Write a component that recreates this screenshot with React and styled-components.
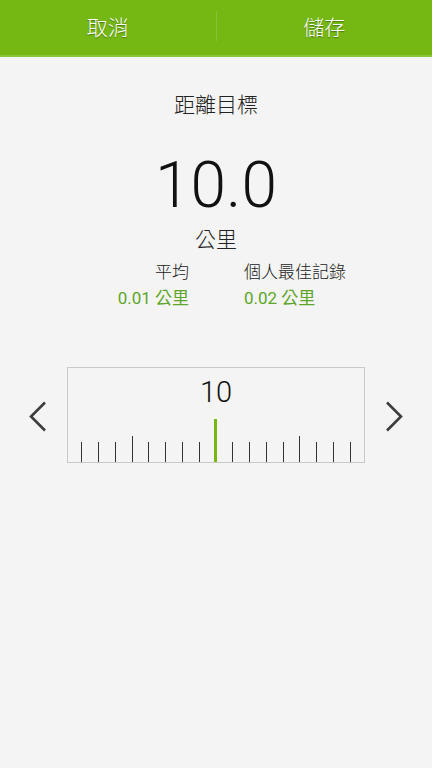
import styled, { createGlobalStyle } from "styled-components";

const GlobalStyle = createGlobalStyle`
  html, body {
    margin: 0;
    padding: 0;
    background: #f4f4f4;
  }
  body {
    font-family: Roboto, "Noto Sans CJK TC", sans-serif;
  }
`;

const Page = styled.div`
  width: 432px;
  min-height: 768px;
  background: #f4f4f4;
  display: flex;
  flex-direction: column;
`;

const TopBar = styled.div`
  height: 55px;
  background: #75b713;
  border-bottom: 2px solid #8cc43a;
  display: grid;
  grid-template-columns: 1fr 1px 1fr;
  align-items: center;
`;

const BarButton = styled.button`
  background: transparent;
  border: none;
  height: 100%;
  color: #fff;
  font-family: Roboto, "Noto Sans CJK TC", sans-serif;
  font-size: 21px;
  font-weight: 300;
  text-shadow: 0 1px 1px rgba(0, 0, 0, 0.35);
  padding: 0 0 4px;
  cursor: pointer;
`;

const BarDivider = styled.div`
  width: 1px;
  height: 30px;
  margin-bottom: 4px;
  background: #86c23a;
`;

const Content = styled.main`
  display: flex;
  flex-direction: column;
  align-items: center;
`;

const Title = styled.h1`
  margin: 34px 0 0;
  font-size: 21px;
  font-weight: 300;
  line-height: 28px;
  color: #222;
`;

const BigValue = styled.div`
  margin-top: 31px;
  font-size: 64px;
  font-weight: 300;
  line-height: 72px;
  color: #111;
`;

const Unit = styled.div`
  margin-top: 4px;
  font-size: 21px;
  font-weight: 300;
  line-height: 28px;
  color: #222;
`;

const Stats = styled.div`
  margin-top: 5px;
  display: grid;
  grid-template-columns: 1fr 1fr;
  column-gap: 55px;
  width: 100%;
  padding-left: 1px;
  box-sizing: border-box;
`;

const Stat = styled.div`
  display: flex;
  flex-direction: column;
  align-items: ${({ align }) => (align === "right" ? "flex-end" : "flex-start")};
  font-size: 17px;
  line-height: 26px;
`;

const StatLabel = styled.span`
  color: #222;
  font-weight: 300;
`;

const StatValue = styled.span`
  color: #5ea62a;
  font-weight: 400;
`;

const RulerRow = styled.div`
  margin-top: 56px;
  width: 100%;
  display: grid;
  grid-template-columns: 67px 298px 67px;
  align-items: center;
`;

const Arrow = styled.button`
  background: transparent;
  border: none;
  padding: 0;
  display: flex;
  justify-content: ${({ side }) => (side === "left" ? "flex-end" : "flex-start")};
  padding-${({ side }) => (side === "left" ? "right" : "left")}: 20px;
  padding-top: 3px;
  cursor: pointer;
`;

const RulerBox = styled.div`
  height: 96px;
  box-sizing: border-box;
  border: 1px solid #c9c9c9;
  display: flex;
  flex-direction: column;
  align-items: center;
`;

const RulerValue = styled.div`
  padding-top: 7px;
  font-size: 29px;
  font-weight: 300;
  line-height: 34px;
  color: #111;
`;

const Ticks = styled.div`
  flex: 1;
  display: flex;
  align-items: flex-end;
  justify-content: center;
`;

const TickCell = styled.div`
  width: 16.8px;
  display: flex;
  justify-content: center;
`;

const Tick = styled.div`
  width: ${({ active }) => (active ? "3px" : "1px")};
  height: ${({ active, long }) => (active ? "43px" : long ? "26px" : "20px")};
  background: ${({ active }) => (active ? "#75b713" : "#333")};
`;

const Chevron = ({ dir }) => (
  <svg width="19" height="31" viewBox="0 0 19 31">
    <path
      d={dir === "left" ? "M17 1.5 L3 15.5 L17 29.5" : "M2 1.5 L16 15.5 L2 29.5"}
      fill="none"
      stroke="#3d3d3d"
      strokeWidth="2.6"
    />
  </svg>
);

const ticks = Array.from({ length: 17 }, (_, i) => i - 8);

export default function App() {
  return (
    <Page>
      <GlobalStyle />
      <TopBar>
        <BarButton>取消</BarButton>
        <BarDivider />
        <BarButton>儲存</BarButton>
      </TopBar>
      <Content>
        <Title>距離目標</Title>
        <BigValue>10.0</BigValue>
        <Unit>公里</Unit>
        <Stats>
          <Stat align="right">
            <StatLabel>平均</StatLabel>
            <StatValue>0.01 公里</StatValue>
          </Stat>
          <Stat align="left">
            <StatLabel>個人最佳記錄</StatLabel>
            <StatValue>0.02 公里</StatValue>
          </Stat>
        </Stats>
        <RulerRow>
          <Arrow side="left">
            <Chevron dir="left" />
          </Arrow>
          <RulerBox>
            <RulerValue>10</RulerValue>
            <Ticks>
              {ticks.map((k) => (
                <TickCell key={k}>
                  <Tick active={k === 0} long={Math.abs(k) === 5} />
                </TickCell>
              ))}
            </Ticks>
          </RulerBox>
          <Arrow side="right">
            <Chevron dir="right" />
          </Arrow>
        </RulerRow>
      </Content>
    </Page>
  );
}
